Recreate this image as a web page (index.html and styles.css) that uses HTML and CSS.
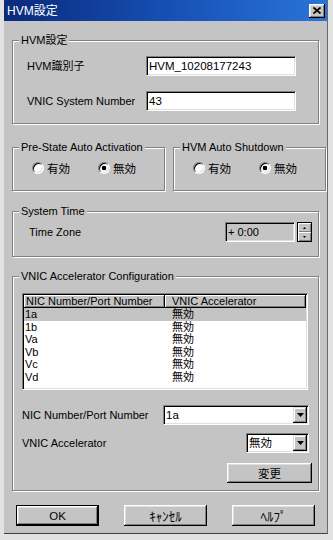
FILE: index.html
```html
<!DOCTYPE html>
<html lang="ja">
<head>
<meta charset="utf-8">
<title>HVM設定</title>
<link rel="stylesheet" href="styles.css">
</head>
<body>
<div class="window">
  <div class="titlebar">
    <span class="title">HVM設定</span>
    <span class="close-btn"><svg width="8" height="7" viewBox="0 0 8 7"><path d="M0.5 0.5L7.5 6.5M7.5 0.5L0.5 6.5" stroke="#000" stroke-width="1.7" fill="none"/></svg></span>
  </div>
  <div class="content">
    <div class="group g-hvm">
      <div class="group-title">HVM設定</div>
      <div class="field-row r1"><span class="label">HVM識別子</span><div class="textbox">HVM_10208177243</div></div>
      <div class="field-row r2"><span class="label">VNIC System Number</span><div class="textbox">43</div></div>
    </div>

    <div class="pair">
      <div class="group g-radio">
        <div class="group-title">Pre-State Auto Activation</div>
        <div class="radio-row">
          <span class="radio-item"><span class="radio"></span>有効</span>
          <span class="radio-item"><span class="radio checked"></span>無効</span>
        </div>
      </div>
      <div class="group g-radio g-right">
        <div class="group-title">HVM Auto Shutdown</div>
        <div class="radio-row">
          <span class="radio-item"><span class="radio"></span>有効</span>
          <span class="radio-item"><span class="radio checked"></span>無効</span>
        </div>
      </div>
    </div>

    <div class="group g-time">
      <div class="group-title">System Time</div>
      <div class="time-row">
        <span class="label">Time Zone</span>
        <div class="spin-field">+ 0:00</div>
        <div class="spin-btns">
          <span class="spin-half"><svg width="3" height="2" viewBox="0 0 3 2"><path d="M1.5 0L3 2H0z" fill="#000"/></svg></span>
          <span class="spin-half"><svg width="3" height="2" viewBox="0 0 3 2"><path d="M0 0H3L1.5 2z" fill="#000"/></svg></span>
        </div>
      </div>
    </div>

    <div class="group g-vnic">
      <div class="group-title">VNIC Accelerator Configuration</div>
      <div class="list">
        <div class="list-head">
          <span class="hcell c1">NIC Number/Port Number</span>
          <span class="hcell c2">VNIC Accelerator</span>
        </div>
        <div class="lrow sel"><span class="c1">1a</span><span class="c2">無効</span></div>
        <div class="lrow"><span class="c1">1b</span><span class="c2">無効</span></div>
        <div class="lrow"><span class="c1">Va</span><span class="c2">無効</span></div>
        <div class="lrow"><span class="c1">Vb</span><span class="c2">無効</span></div>
        <div class="lrow"><span class="c1">Vc</span><span class="c2">無効</span></div>
        <div class="lrow"><span class="c1">Vd</span><span class="c2">無効</span></div>
      </div>
      <div class="combo-row cr1">
        <span class="label">NIC Number/Port Number</span>
        <div class="combo wide"><span class="combo-text">1a</span><span class="combo-btn"><svg width="7" height="4" viewBox="0 0 7 4"><path d="M0 0H7L3.5 4z" fill="#000"/></svg></span></div>
      </div>
      <div class="combo-row cr2">
        <span class="label">VNIC Accelerator</span>
        <div class="combo narrow"><span class="combo-text">無効</span><span class="combo-btn"><svg width="7" height="4" viewBox="0 0 7 4"><path d="M0 0H7L3.5 4z" fill="#000"/></svg></span></div>
      </div>
      <div class="change-row"><span class="btn change">変更</span></div>
    </div>

    <div class="buttons">
      <span class="btn default">OK</span>
      <span class="btn kana">ｷｬﾝｾﾙ</span>
      <span class="btn kana">ﾍﾙﾌﾟ</span>
    </div>
  </div>
</div>
</body>
</html>
```

FILE: styles.css
```css
html, body {
  margin: 0;
  padding: 0;
}
body {
  background: #e2e2e2;
  width: 333px;
  height: 540px;
  overflow: hidden;
  font-family: "Liberation Sans", "Noto Sans CJK JP", sans-serif;
  font-size: 11px;
  color: #000;
}
.window {
  margin-left: 4px;
  width: 324px;
  height: 534px;
  box-sizing: border-box;
  background: #c4c4c4;
  border-right: 1px solid #6a6a6a;
  border-bottom: 1px solid #404040;
}
.titlebar {
  height: 21px;
  background: linear-gradient(90deg, #0a2a7a 0%, #164fb4 50%, #2a74d8 100%);
  display: flex;
  align-items: center;
  justify-content: space-between;
  padding: 0 2px 0 3px;
  color: #fff;
  font-size: 12px;
}
.title {
  line-height: 14px;
}
.close-btn {
  width: 16px;
  height: 14px;
  box-sizing: border-box;
  background: #c4c4c4;
  box-shadow: inset -1px -1px #000, inset 1px 1px #fff, inset -2px -2px #808080, inset 2px 2px #dfdfdf;
  display: flex;
  align-items: center;
  justify-content: center;
}
.content {
  padding: 0 8px;
}
.group {
  --pl: 0px;
  border: 1px solid #808080;
  box-shadow: inset 1px 1px 0 #fff, 1px 1px 0 #fff;
  padding-left: var(--pl);
}
.group-title {
  margin: -8px 0 0 calc(6px - var(--pl));
  padding: 0 2px;
  background: #c4c4c4;
  line-height: 14px;
  width: max-content;
}
.label {
  line-height: 14px;
}

/* HVM group */
.g-hvm {
  --pl: 14px;
  margin-top: 19px;
  padding-bottom: 12px;
}
.field-row {
  display: flex;
  align-items: center;
  height: 20px;
}
.field-row .label {
  width: 119px;
}
.r1 { margin-top: 9px; }
.r2 { margin-top: 15px; }
.textbox {
  width: 150px;
  height: 20px;
  box-sizing: border-box;
  background: #fff;
  border: 1px solid;
  border-color: #808080 #fff #fff #808080;
  box-shadow: inset 1px 1px #000, inset -1px -1px #dfdfdf;
  padding-left: 2px;
  line-height: 18px;
  font-size: 11.5px;
}

/* radio groups */
.pair {
  margin-top: 23px;
  display: flex;
  gap: 8px;
}
.g-radio {
  --pl: 19px;
  flex: 1;
  padding-bottom: 15px;
}
.radio-row {
  margin-top: 7px;
  height: 14px;
  display: flex;
  align-items: center;
}
.radio-item {
  width: 66px;
  display: inline-flex;
  align-items: center;
  gap: 3px;
  font-size: 11.5px;
}
.radio {
  width: 12px;
  height: 12px;
  box-sizing: border-box;
  border-radius: 50%;
  border: 1px solid;
  border-color: #808080 #fff #fff #808080;
  background: #fff;
  box-shadow: inset 1px 1px 0 #000, inset -1px -1px 0 #dfdfdf;
}
.radio.checked {
  background: radial-gradient(circle, #000 0 2px, #fff 2.6px);
}

/* time group */
.g-time {
  --pl: 16px;
  margin-top: 20px;
  padding-right: 6px;
  padding-bottom: 14px;
}
.time-row {
  margin-top: 4px;
  height: 20px;
  display: flex;
  align-items: center;
}
.time-row .label {
  flex: 1;
}
.spin-field {
  width: 70px;
  height: 20px;
  box-sizing: border-box;
  background: #c4c4c4;
  border: 1px solid;
  border-color: #808080 #fff #fff #808080;
  box-shadow: inset 1px 1px #000, inset -1px -1px #dfdfdf;
  padding-left: 2px;
  line-height: 18px;
}
.spin-btns {
  margin-left: 2px;
  width: 15px;
  height: 20px;
  box-sizing: border-box;
  border: 1px solid #000;
  display: flex;
  flex-direction: column;
}
.spin-half {
  flex: 1;
  display: flex;
  align-items: center;
  justify-content: center;
  background: #c4c4c4;
  box-shadow: inset 1px 1px #fff, inset -1px -1px #808080;
}

/* vnic group */
.g-vnic {
  --pl: 9px;
  margin-top: 19px;
  padding-right: 6px;
  padding-bottom: 7px;
}
.list {
  margin-top: 10px;
  margin-right: 4px;
  height: 97px;
  box-sizing: border-box;
  background: #fff;
  border: 1px solid;
  border-color: #808080 #fff #fff #808080;
  box-shadow: inset 1px 1px #000, inset -1px -1px #dfdfdf;
  padding: 1px;
}
.list-head {
  display: flex;
  height: 13px;
}
.hcell {
  box-sizing: border-box;
  background: #c4c4c4;
  border-right: 1px solid #000;
  border-bottom: 1px solid #000;
  box-shadow: inset 1px 1px #fff, inset -1px -1px #808080;
  line-height: 12px;
}
.list-head .c1 {
  width: 141px;
  padding-left: 2px;
}
.list-head .c2 {
  flex: 1;
  padding-left: 7px;
}
.lrow {
  display: flex;
  height: 12.5px;
  line-height: 12.5px;
}
.lrow.sel {
  background: #c4c4c4;
}
.lrow .c1 {
  width: 141px;
  padding-left: 1px;
  box-sizing: border-box;
}
.lrow .c2 {
  padding-left: 7px;
}
.combo-row {
  display: flex;
  align-items: center;
  justify-content: space-between;
  margin-right: 3px;
  height: 20px;
}
.cr1 { margin-top: 15px; }
.cr2 { margin-top: 8px; }
.combo {
  height: 20px;
  box-sizing: border-box;
  background: #fff;
  border: 1px solid;
  border-color: #808080 #fff #fff #808080;
  box-shadow: inset 1px 1px #000, inset -1px -1px #dfdfdf;
  padding: 1px;
  display: flex;
}
.combo.wide { width: 146px; }
.combo.narrow { width: 63px; }
.combo-text {
  flex: 1;
  padding-left: 1px;
  line-height: 16px;
  font-size: 11.5px;
}
.combo-btn {
  width: 14px;
  background: #c4c4c4;
  box-shadow: inset -1px -1px #000, inset 1px 1px #dfdfdf, inset -2px -2px #808080, inset 2px 2px #fff;
  display: flex;
  align-items: center;
  justify-content: center;
}
.change-row {
  margin-top: 10px;
  display: flex;
  justify-content: flex-end;
}
.btn {
  display: flex;
  align-items: center;
  justify-content: center;
  box-sizing: border-box;
  background: #c4c4c4;
  box-shadow: inset -1px -1px #000, inset 1px 1px #fff, inset -2px -2px #808080, inset 2px 2px #dfdfdf;
  font-size: 11.5px;
}
.btn.change {
  width: 85px;
  height: 20px;
}
.buttons {
  margin-top: 14px;
  padding: 0 4px;
  display: flex;
  justify-content: space-between;
}
.buttons .btn {
  width: 83px;
  height: 21px;
}
.btn.kana {
  font-size: 13px;
}
.btn.default {
  border: 1px solid #000;
}
```
